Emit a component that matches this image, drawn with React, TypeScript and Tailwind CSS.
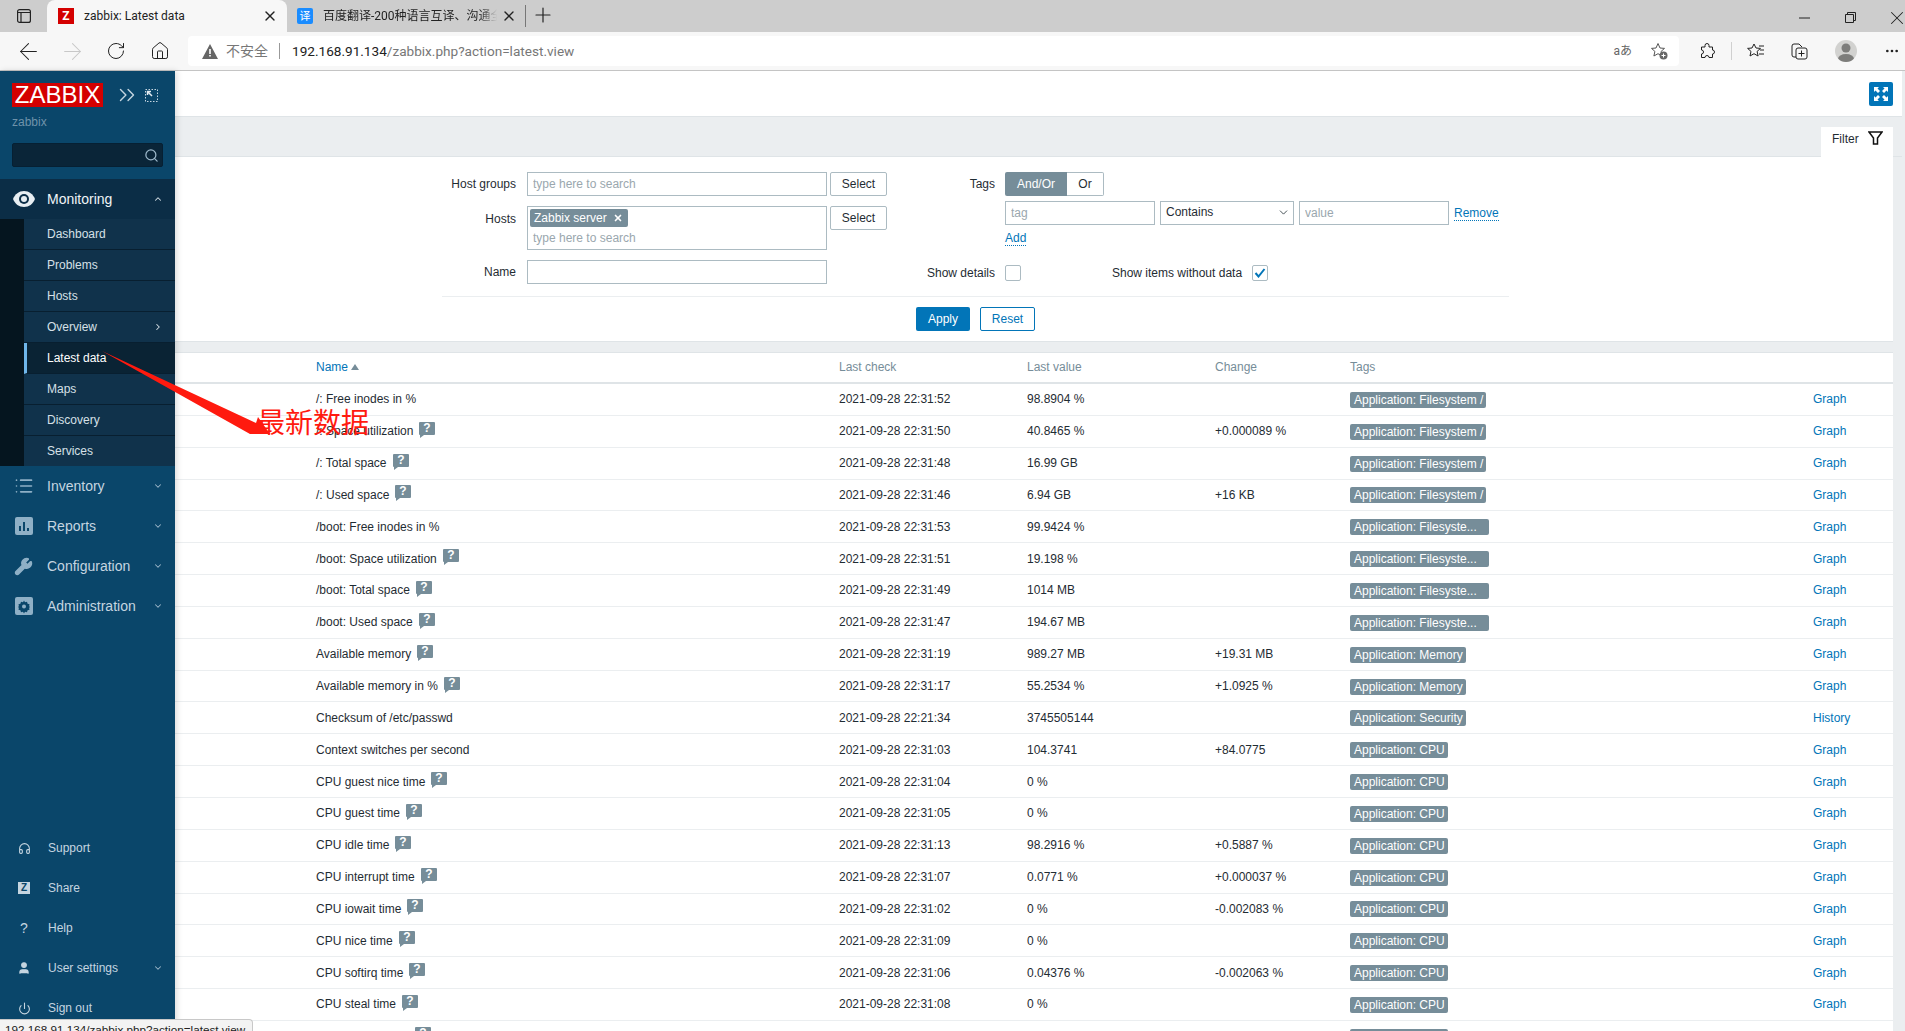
import React from 'react';
import {
  ArrowLeft, ArrowRight, ChevronDown, ChevronRight, ChevronUp, ChevronsRight, Headphones,
  Home, List, MoreHorizontal, Plus, Power, RotateCw, Search, User, Wrench, X,
} from 'lucide-react';

type Row = { name: string; help?: boolean; check: string; value: string; change?: string; tag: string; wide?: boolean; action?: string };

const FS = 'Application: Filesystem /';
const BOOT = 'Application: Filesyste...';
const MEM = 'Application: Memory';
const CPU = 'Application: CPU';

const rows: Row[] = [
  { name: '/: Free inodes in %', check: '2021-09-28 22:31:52', value: '98.8904 %', tag: FS },
  { name: '/: Space utilization', help: true, check: '2021-09-28 22:31:50', value: '40.8465 %', change: '+0.000089 %', tag: FS },
  { name: '/: Total space', help: true, check: '2021-09-28 22:31:48', value: '16.99 GB', tag: FS },
  { name: '/: Used space', help: true, check: '2021-09-28 22:31:46', value: '6.94 GB', change: '+16 KB', tag: FS },
  { name: '/boot: Free inodes in %', check: '2021-09-28 22:31:53', value: '99.9424 %', tag: BOOT, wide: true },
  { name: '/boot: Space utilization', help: true, check: '2021-09-28 22:31:51', value: '19.198 %', tag: BOOT, wide: true },
  { name: '/boot: Total space', help: true, check: '2021-09-28 22:31:49', value: '1014 MB', tag: BOOT, wide: true },
  { name: '/boot: Used space', help: true, check: '2021-09-28 22:31:47', value: '194.67 MB', tag: BOOT, wide: true },
  { name: 'Available memory', help: true, check: '2021-09-28 22:31:19', value: '989.27 MB', change: '+19.31 MB', tag: MEM },
  { name: 'Available memory in %', help: true, check: '2021-09-28 22:31:17', value: '55.2534 %', change: '+1.0925 %', tag: MEM },
  { name: 'Checksum of /etc/passwd', check: '2021-09-28 22:21:34', value: '3745505144', tag: 'Application: Security', action: 'History' },
  { name: 'Context switches per second', check: '2021-09-28 22:31:03', value: '104.3741', change: '+84.0775', tag: CPU },
  { name: 'CPU guest nice time', help: true, check: '2021-09-28 22:31:04', value: '0 %', tag: CPU },
  { name: 'CPU guest time', help: true, check: '2021-09-28 22:31:05', value: '0 %', tag: CPU },
  { name: 'CPU idle time', help: true, check: '2021-09-28 22:31:13', value: '98.2916 %', change: '+0.5887 %', tag: CPU },
  { name: 'CPU interrupt time', help: true, check: '2021-09-28 22:31:07', value: '0.0771 %', change: '+0.000037 %', tag: CPU },
  { name: 'CPU iowait time', help: true, check: '2021-09-28 22:31:02', value: '0 %', change: '-0.002083 %', tag: CPU },
  { name: 'CPU nice time', help: true, check: '2021-09-28 22:31:09', value: '0 %', tag: CPU },
  { name: 'CPU softirq time', help: true, check: '2021-09-28 22:31:06', value: '0.04376 %', change: '-0.002063 %', tag: CPU },
  { name: 'CPU steal time', help: true, check: '2021-09-28 22:31:08', value: '0 %', tag: CPU },
  { name: 'CPU system time', help: true, check: '', value: '', tag: CPU },
];

const HelpIcon = () => (
  <svg width="16" height="16" viewBox="0 0 16 16" className="ml-[6px] -mt-[3px] shrink-0">
    <path d="M1 0h14a1 1 0 0 1 1 1v11a1 1 0 0 1-1 1H5l-4 3v-3a1 1 0 0 1-1-1V1a1 1 0 0 1 1-1z" fill="#768d99" />
    <text x="8" y="10" textAnchor="middle" fontSize="12" fontWeight="700" fill="#fff" fontFamily="Liberation Sans, sans-serif">?</text>
  </svg>
);

const EyeIcon = () => (
  <svg width="22" height="16" viewBox="0 0 22 16">
    <path d="M11 0C6 0 2 3 0 8c2 5 6 8 11 8s9-3 11-8c-2-5-6-8-11-8z" fill="#e8eef2" />
    <circle cx="11" cy="8" r="5" fill="#0b2d46" />
    <circle cx="11" cy="8" r="3" fill="#e8eef2" />
  </svg>
);

const ReportsIcon = () => (
  <svg width="18" height="18" viewBox="0 0 18 18">
    <rect width="18" height="18" rx="2" fill="#8fb0c6" />
    <path d="M4 9h2v5H4zM8 5h2v9H8zM12 11h2v3h-2z" fill="#0a466a" />
  </svg>
);

const AdminIcon = () => (
  <svg width="18" height="18" viewBox="0 0 18 18">
    <rect width="18" height="18" rx="2" fill="#8fb0c6" />
    <path d="M9 3.500l1 1.700 2-.4.6 1.900 1.900.6-.4 2 1 .7-1 .7.4 2-1.900.6-.6 1.900-2-.4-1 1.600-1-1.600-2 .4-.6-1.900-1.900-.6.4-2-1-.7 1-.7-.4-2 1.900-.6.6-1.900 2 .4z" fill="#0a466a" />
    <circle cx="9" cy="9.500" r="2" fill="#8fb0c6" />
  </svg>
);

const NavGroup = ({ icon, label, open }: { icon: React.ReactNode; label: string; open?: boolean }) => (
  <div className={`flex h-10 items-center text-sm ${open ? 'bg-[#0b2d46] text-[#f0f4f7]' : 'text-[#c5d5e0]'}`}>
    <span className="flex w-[47px] justify-center pl-[1px] pr-[1px] text-[#8fb0c6]">{icon}</span>
    <span className="flex-1">{label}</span>
    {open
      ? <ChevronUp size={10} strokeWidth={2.5} className="mr-[12px] text-[#d6e0e7]" />
      : <ChevronDown size={10} strokeWidth={2.5} className="mr-[12px] text-[#9db8ca]" />}
  </div>
);

const SubItem = ({ label, active, more }: { label: string; active?: boolean; more?: boolean }) => (
  <div className={`flex h-[31px] items-center border-b border-[#081f30] text-xs ${active ? 'border-l-[3px] border-l-[#6fb6ea] bg-[#0a2334] pl-[20px] text-white' : 'bg-[#10324b] pl-[23px] text-[#d6e0e7]'}`}>
    <span className="flex-1">{label}</span>
    {more && <ChevronRight size={10} strokeWidth={2.5} className="mr-[12px]" />}
  </div>
);

const BottomItem = ({ icon, label, more }: { icon: React.ReactNode; label: string; more?: boolean }) => (
  <div className="flex h-10 items-center text-xs text-[#c5d5e0]">
    <span className="flex w-[48px] justify-center text-[#c5d5e0]">{icon}</span>
    <span className="flex-1">{label}</span>
    {more && <ChevronDown size={10} strokeWidth={2.5} className="mr-[12px] text-[#9db8ca]" />}
  </div>
);

const Sidebar = () => (
  <aside className="z-10 flex w-[175px] shrink-0 flex-col bg-[#0a466a] shadow-[2px_0_6px_rgba(0,0,0,0.14)]">
    <div className="h-[108px] px-3 pt-3">
      <div className="flex items-center">
        <div className="flex h-6 w-[91px] items-center justify-center bg-[#d40000] text-2xl leading-none text-white">ZABBIX</div>
        <ChevronsRight size={26} strokeWidth={1.3} className="-my-1 ml-[11px] text-[#c5d5e0]" />
        <svg width="13" height="13" viewBox="0 0 13 13" fill="none" className="ml-[5px]">
          <path d="M.5.500h12v12H.5z" stroke="#c5d5e0" strokeDasharray="1.500 1.500" />
          <path d="M7 7L2.500 2.500M2.500 6V2.500H6" stroke="#e4ecf1" strokeWidth="1.500" />
        </svg>
      </div>
      <div className="mt-[7px] text-xs text-[#6f93aa]">zabbix</div>
      <div className="mt-[13px] flex h-6 w-[151px] items-center justify-end rounded-[2px] border border-[#062033] bg-[#0a2538] pr-[3px]">
        <Search size={15} className="text-[#9db8ca]" />
      </div>
    </div>
    <NavGroup icon={<EyeIcon />} label="Monitoring" open />
    <div className="h-[247px] overflow-hidden bg-[#05151f] pl-6">
      <SubItem label="Dashboard" />
      <SubItem label="Problems" />
      <SubItem label="Hosts" />
      <SubItem label="Overview" more />
      <SubItem label="Latest data" active />
      <SubItem label="Maps" />
      <SubItem label="Discovery" />
      <SubItem label="Services" />
    </div>
    <NavGroup icon={<List size={20} />} label="Inventory" />
    <NavGroup icon={<ReportsIcon />} label="Reports" />
    <NavGroup icon={<Wrench size={19} fill="currentColor" />} label="Configuration" />
    <NavGroup icon={<AdminIcon />} label="Administration" />
    <div className="mt-auto pb-[3px]">
      <BottomItem icon={<Headphones size={13} />} label="Support" />
      <BottomItem icon={<span className="flex h-3 w-3 items-center justify-center bg-[#c5d5e0] text-[10px] font-bold leading-none text-[#0a466a]">Z</span>} label="Share" />
      <BottomItem icon={<span className="text-sm leading-none">?</span>} label="Help" />
      <BottomItem icon={<User size={14} fill="currentColor" />} label="User settings" more />
      <BottomItem icon={<Power size={13} />} label="Sign out" />
    </div>
  </aside>
);

const Field = ({ placeholder, w }: { placeholder?: string; w: string }) => (
  <input readOnly placeholder={placeholder} className={`block h-6 ${w} border border-[#acbbc2] bg-white px-[5px] text-xs outline-none placeholder:text-[#9aa7ae]`} />
);

const SmallBtn = ({ children }: { children: React.ReactNode }) => (
  <button className="ml-[3px] h-6 w-[57px] rounded-[2px] border border-[#acbbc2] bg-white text-xs text-[#1f2c33]">{children}</button>
);

const Label = ({ children, className = 'w-[74px]' }: { children: React.ReactNode; className?: string }) => (
  <span className={`${className} shrink-0 text-right text-xs text-[#1f2c33]`}>{children}</span>
);

const Check = ({ checked }: { checked?: boolean }) => (
  <span className="ml-[10px] flex h-4 w-4 shrink-0 items-center justify-center rounded-[2px] border border-[#acbbc2] bg-white">
    {checked && (
      <svg width="12" height="10" viewBox="0 0 12 10" fill="none"><path d="M1.500 5l3 3.500 6-7.500" stroke="#0275b8" strokeWidth="2" /></svg>
    )}
  </span>
);

const FilterPanel = () => (
  <div className="mr-[12px] h-[185px] border-b border-[#dfe4e7] bg-white pl-[267px] pt-[15px]">
    <div className="flex w-[1067px] items-start">
      <div className="flex w-[445px] shrink-0 flex-col gap-[10px]">
        <div className="flex items-center">
          <Label>Host groups</Label>
          <span className="w-[11px]" />
          <Field placeholder="type here to search" w="w-[300px]" />
          <SmallBtn>Select</SmallBtn>
        </div>
        <div className="flex items-start">
          <Label className="w-[74px] pt-[5px]">Hosts</Label>
          <span className="w-[11px]" />
          <div className="h-[44px] w-[300px] border border-[#acbbc2] pl-[2px] pt-[2px]">
            <div className="flex h-[18px] w-[98px] items-center justify-between rounded-[2px] bg-[#768d99] pl-[4px] pr-[5px] text-xs text-white">
              Zabbix server
              <X size={10} strokeWidth={4} />
            </div>
            <div className="mt-[2px] pl-[3px] text-xs leading-[18px] text-[#9aa7ae]">type here to search</div>
          </div>
          <SmallBtn>Select</SmallBtn>
        </div>
        <div className="flex items-center">
          <Label>Name</Label>
          <span className="w-[11px]" />
          <Field w="w-[300px]" />
        </div>
      </div>
      <div className="flex flex-col">
        <div className="flex items-center">
          <Label className="w-[108px]">Tags</Label>
          <div className="ml-[10px] flex h-6 text-xs">
            <span className="flex w-[62px] items-center justify-center rounded-l-[2px] bg-[#768d99] text-white">And/Or</span>
            <span className="flex w-[37px] items-center justify-center rounded-r-[2px] border border-l-0 border-[#acbbc2] text-[#1f2c33]">Or</span>
          </div>
        </div>
        <div className="ml-[118px] mt-[5px] flex items-center">
          <Field placeholder="tag" w="w-[150px]" />
          <div className="ml-[5px] flex h-6 w-[134px] items-center justify-between border border-[#acbbc2] pb-[2px] pl-[5px] pr-[3px] text-xs text-[#1f2c33]">
            Contains
            <ChevronDown size={13} strokeWidth={1.500} />
          </div>
          <div className="ml-[5px]"><Field placeholder="value" w="w-[150px]" /></div>
          <a className="ml-[5px] border-b border-dotted border-[#0275b8] text-xs leading-[14px] text-[#0275b8]">Remove</a>
        </div>
        <div className="ml-[118px] mt-[3px] flex h-5 items-center">
          <a className="border-b border-dotted border-[#0275b8] text-xs leading-[14px] text-[#0275b8]">Add</a>
        </div>
        <div className="mt-[17px] flex h-4 items-center">
          <Label className="w-[108px]">Show details</Label>
          <Check />
          <span className="ml-[91px] text-xs text-[#1f2c33]">Show items without data</span>
          <Check checked />
        </div>
      </div>
    </div>
    <div className="mt-[12px] w-[1067px] border-t border-[#ebeef0]" />
    <div className="mt-[10px] flex w-[1067px] justify-center gap-[10px]">
      <button className="h-6 w-[54px] rounded-[2px] bg-[#0275b8] text-xs text-white">Apply</button>
      <button className="h-6 w-[55px] rounded-[2px] border border-[#0275b8] bg-white text-xs text-[#0275b8]">Reset</button>
    </div>
  </div>
);

const rowGrid = 'grid grid-cols-[523px_188px_188px_135px_463px_1fr] pl-[141px]';

const DataTable = () => (
  <div className="mr-[12px] mt-[10px] border-t border-[#dfe4e7] bg-white text-xs text-[#1f2c33]">
    <div className={`${rowGrid} h-[31px] items-center border-b-2 border-[#dfe4e7] pb-[2px] text-[#768d99]`}>
      <span className="flex items-center text-[#0275b8]">
        Name
        <svg width="8" height="6" viewBox="0 0 8 6" className="ml-[3px]"><path d="M4 0l4 6H0z" fill="#768d99" /></svg>
      </span>
      <span>Last check</span>
      <span>Last value</span>
      <span>Change</span>
      <span>Tags</span>
      <span />
    </div>
    {rows.map((r) => (
      <div key={r.name} className={`${rowGrid} h-[31.85px] items-center border-b border-[#ebeef0]`}>
        <span className="flex items-center">
          {r.name}
          {r.help && <HelpIcon />}
        </span>
        <span>{r.check}</span>
        <span>{r.value}</span>
        <span>{r.change}</span>
        <span className="pt-[1px]">
          <span className={`flex h-4 items-center whitespace-nowrap rounded-[2px] bg-[#768d99] pl-[4px] text-white ${r.wide ? 'w-[139px]' : 'w-fit pr-[3px]'}`}>{r.tag}</span>
        </span>
        <span className="text-[#0275b8]">{r.action ?? 'Graph'}</span>
      </div>
    ))}
  </div>
);

const Main = () => (
  <main className="min-w-0 flex-1 bg-[#ebeef0]">
    <div className="mr-[3px] flex h-[46px] items-center justify-end border-b border-[#dfe4e7] bg-white pr-[9px]">
      <button className="flex h-6 w-6 items-center justify-center rounded-[2px] bg-[#0275b8]">
        <svg width="16" height="16" viewBox="0 0 16 16" fill="#fff">
          <path d="M1 1h5L4.500 2.500 7 5 5 7 2.500 4.500 1 6zM15 1v5l-1.500-1.500L11 7 9 5l2.500-2.500L10 1zM1 15v-5l1.500 1.500L5 9l2 2-2.500 2.500L6 15zM15 15h-5l1.500-1.500L9 11l2-2 2.500 2.500L15 10z" />
        </svg>
      </button>
    </div>
    <div className="mr-[3px] flex h-10 items-end justify-end border-b border-[#dfe4e7] pr-[9px]">
      <div className="relative -mb-px flex h-[30px] w-[72px] items-start bg-white pl-[11px] pt-[5px] text-xs text-[#1f2c33]">
        <span className="leading-[14px]">Filter</span>
        <svg width="15" height="14" viewBox="0 0 15 14" fill="none" className="-mt-px ml-[9px]">
          <path d="M1 1h13L9.500 7v6h-4V7z" stroke="#111" strokeWidth="1.500" />
        </svg>
      </div>
    </div>
    <FilterPanel />
    <DataTable />
  </main>
);

const ChromeTab = () => (
  <div className="flex h-8 items-end bg-[#cdcdcd]">
    <div className="flex w-[47px] justify-center self-center">
      <svg width="14" height="14" viewBox="0 0 14 14" fill="none" stroke="#222" strokeWidth="1.200">
        <rect x=".6" y=".6" width="12.800" height="12.800" rx="2" />
        <path d="M.6 3.500h12.800M4 3.500v9.900" />
      </svg>
    </div>
    <div className="flex h-8 w-[240px] items-center rounded-t-[8px] bg-[#f7f7f7] pl-[11px]">
      <span className="flex h-4 w-4 items-center justify-center bg-[#d40000] text-xs font-bold leading-none text-white">Z</span>
      <span className="ml-[10px] flex-1 text-xs text-[#222]">zabbix: Latest data</span>
      <X size={16} strokeWidth={2} className="mr-[9px] text-[#222]" />
    </div>
    <div className="flex h-8 w-[238px] items-center pl-[10px]">
      <span className="flex h-4 w-4 items-center justify-center rounded-[2px] bg-[#1a8cff] text-[11px] leading-none text-white">译</span>
      <span className="ml-[10px] w-[174px] overflow-hidden whitespace-nowrap text-xs text-[#222] [mask-image:linear-gradient(to_right,black_90%,transparent)]">百度翻译-200种语言互译、沟通全世界！</span>
      <X size={16} strokeWidth={2} className="ml-[4px] text-[#222]" />
    </div>
    <div className="mb-[5px] h-[22px] w-px bg-[#777]" />
    <Plus size={24} strokeWidth={1.2} className="mb-[5px] ml-[5px] text-[#222]" />
    <div className="mb-[9px] ml-auto flex items-center text-[#222]">
      <svg width="11" height="2" viewBox="0 0 11 2" className="mr-[35px]"><path d="M0 1h11" stroke="#222" /></svg>
      <svg width="11" height="11" viewBox="0 0 11 11" fill="none" stroke="#222" className="mr-[30px]">
        <path d="M.5 2.500h8v8h-8zM2.500 2.500V.5h8v8h-2" />
      </svg>
      <X size={22} strokeWidth={1.1} className="-my-2 mr-[-3px]" />
    </div>
  </div>
);

const ToolBtn = ({ children }: { children: React.ReactNode }) => (
  <span className="flex w-[44px] justify-center">{children}</span>
);

const ChromeBar = () => (
  <div className="flex h-[39px] items-center border-b border-[#c4c4c4] bg-[#f7f7f7] text-[#222]">
    <div className="flex w-[188px] items-center pl-[6px]">
      <ToolBtn><ArrowLeft size={27} strokeWidth={0.9} /></ToolBtn>
      <ToolBtn><ArrowRight size={27} strokeWidth={0.9} className="text-[#c8c8c8]" /></ToolBtn>
      <ToolBtn><RotateCw size={20} strokeWidth={1.2} /></ToolBtn>
      <ToolBtn><Home size={20} strokeWidth={1.2} /></ToolBtn>
    </div>
    <div className="flex h-[30px] w-[1491px] items-center rounded-[4px] bg-white pl-[14px]">
      <svg width="16" height="15" viewBox="0 0 16 15"><path d="M8 0l8 15H0z" fill="#666" /><path d="M7.200 5h1.600v5H7.200zM7.200 11h1.600v1.600H7.200z" fill="#fff" /></svg>
      <span className="ml-[8px] text-sm text-[#777]">不安全</span>
      <span className="ml-[11px] h-[16px] w-px bg-[#999]" />
      <span className="ml-[12px] pt-px text-[13.6px] text-[#222]">192.168.91.134<span className="text-[#777]">/zabbix.php?action=latest.view</span></span>
      <span className="ml-auto text-xs text-[#666]">aあ</span>
      <svg width="18" height="18" viewBox="0 0 18 18" fill="none" className="ml-[18px] mr-[11px]">
        <path d="M8 1.500l2 4.500 4.500.4-3.400 3 1 4.600L8 11.700 3.900 14l1-4.600-3.400-3L6 6z" stroke="#555" />
        <circle cx="13.500" cy="13.500" r="4" fill="#666" />
        <path d="M13.500 11.500v4M11.500 13.500h4" stroke="#fff" />
      </svg>
    </div>
    <svg width="16" height="16" viewBox="0 0 16 16" fill="none" stroke="#222" className="ml-[20px]">
      <path d="M6 2.500a2 2 0 0 1 4 0V4h3.500v3a2 2 0 0 1 0 4v3.500H10a2 2 0 0 0-4 0H2.500V11a2 2 0 0 0 0-4V4H6z" />
    </svg>
    <span className="ml-[16px] h-[18px] w-px bg-[#d0d0d0]" />
    <svg width="18" height="16" viewBox="0 0 18 16" fill="none" stroke="#222" className="ml-[15px]">
      <path d="M7 1l2 4 4.500.4-3.400 3 1 4.600L7 10.700 3 13l1-4.600-3.400-3L5 5zM12 3h5M13 7h4M12 11h5" />
    </svg>
    <svg width="17" height="17" viewBox="0 0 17 17" fill="none" stroke="#222" className="ml-[26px]">
      <path d="M5 14H3a2 2 0 0 1-2-2V3a2 2 0 0 1 2-2h5l3 3" />
      <rect x="5" y="5" width="11" height="11" rx="2" />
      <path d="M10.500 7.500v6M7.500 10.500h6" />
    </svg>
    <span className="ml-[27px] flex h-[22px] w-[22px] items-end justify-center overflow-hidden rounded-full bg-[#d2d2d0]">
      <svg width="16" height="20" viewBox="0 0 16 20"><circle cx="8" cy="6" r="4.500" fill="#7d7d7b" /><ellipse cx="8" cy="17" rx="8" ry="5" fill="#7d7d7b" /></svg>
    </span>
    <MoreHorizontal size={16} className="ml-[27px]" />
  </div>
);

export default function App() {
  return (
    <div className="relative h-[1031px] w-full overflow-hidden bg-white font-['Liberation_Sans','Noto_Sans_CJK_SC',sans-serif]">
      <div className="font-['Roboto','Noto_Sans_CJK_SC',sans-serif]">
        <ChromeTab />
        <ChromeBar />
      </div>
      <div className="flex h-[960px]">
        <Sidebar />
        <Main />
      </div>

      {/* arrow + note drawn over the screenshot */}
      <svg width="300" height="100" viewBox="0 0 300 100" className="pointer-events-none absolute left-0 top-[345px] z-20">
        <path d="M102 6L256 78 258 72 270 89H250z" fill="#ff1a0f" />
      </svg>
      <div className="pointer-events-none absolute left-[257px] top-[402px] z-20 font-['Noto_Sans_CJK_SC',sans-serif] text-[28px] leading-[38px] text-[#ff1a0f]">最新数据</div>

      <div className="absolute bottom-0 left-0 z-30 h-3 w-[253px] overflow-hidden whitespace-nowrap rounded-tr-[4px] border-r border-t border-[#c8c8c8] bg-[#f3f3f3] pl-[5px] text-[11.7px] leading-[20px] text-[#222]">192.168.91.134/zabbix.php?action=latest.view</div>
    </div>
  );
}
